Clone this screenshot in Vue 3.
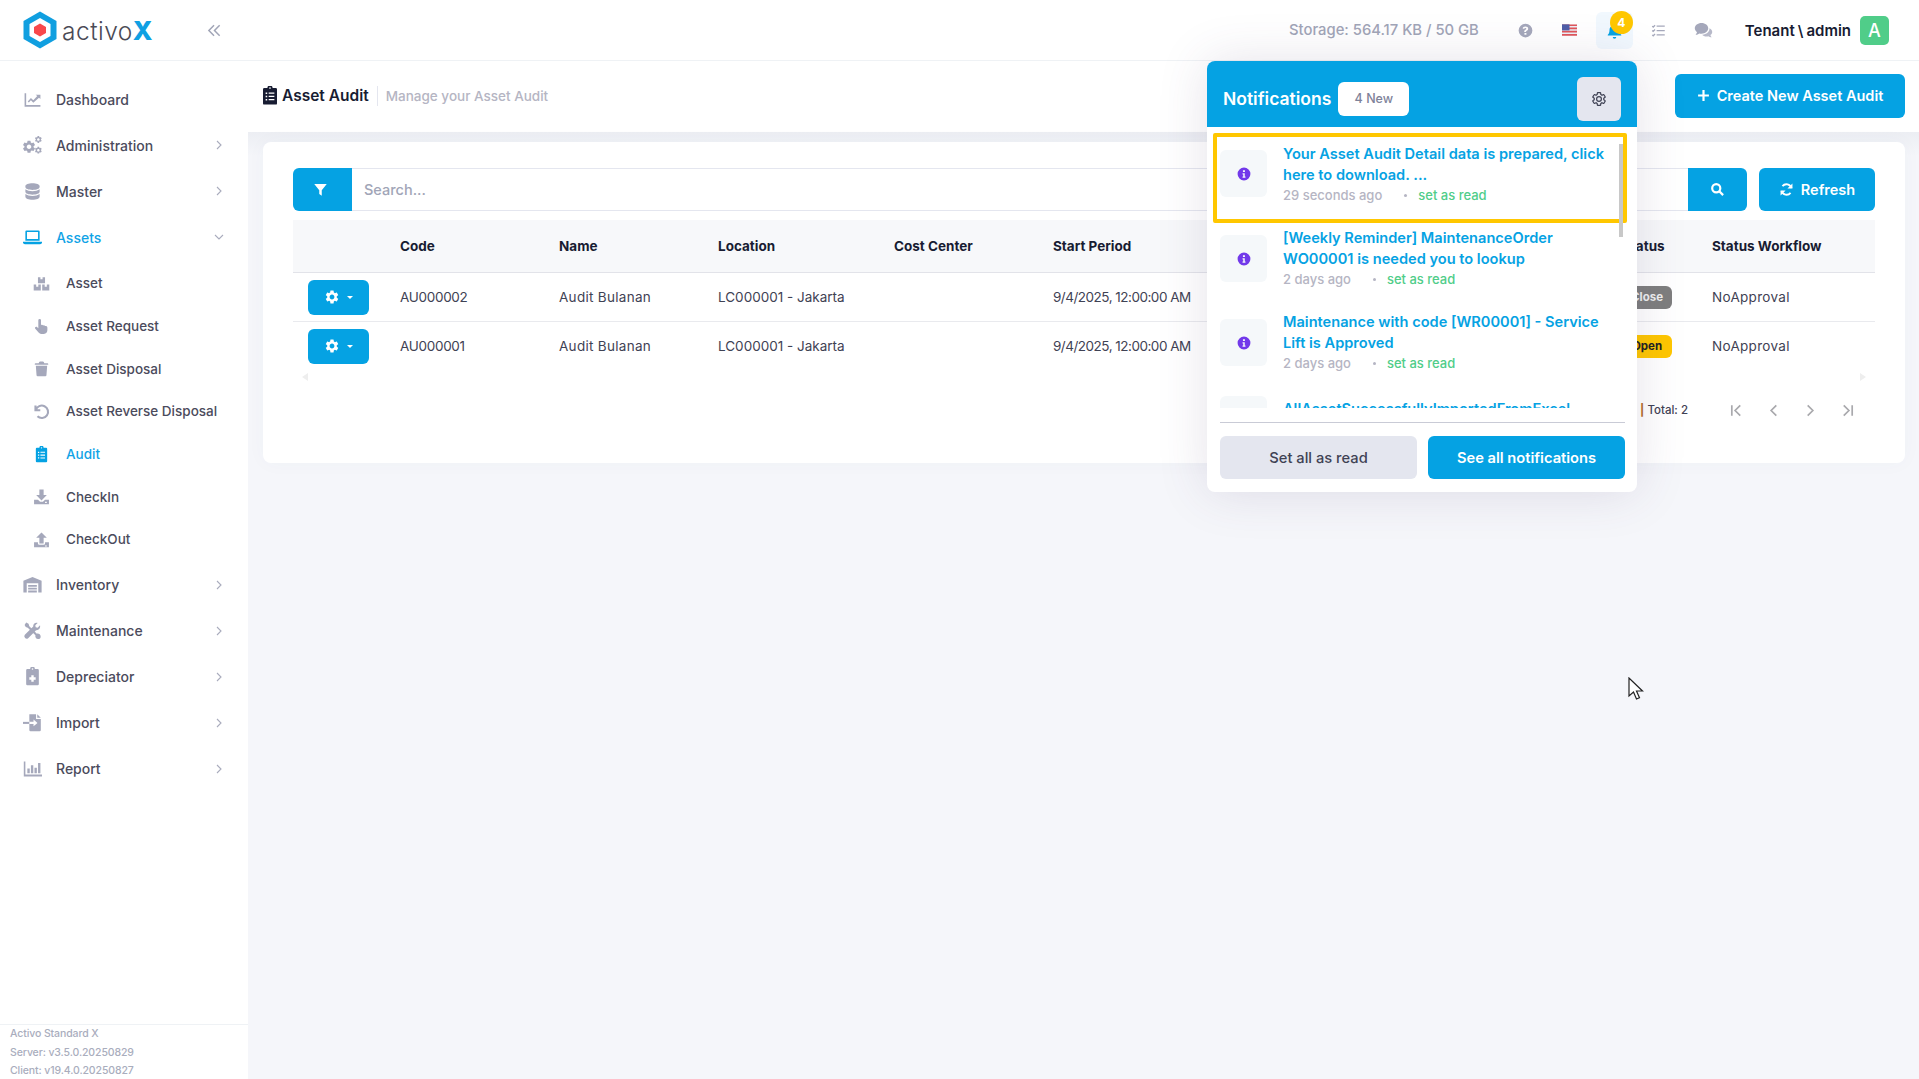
<script setup>
const gear =
  "M19.14 12.94c.04-.3.06-.61.06-.94 0-.32-.02-.64-.07-.94l2.03-1.58a.49.49 0 0 0 .12-.61l-1.92-3.32a.488.488 0 0 0-.59-.22l-2.39.96c-.5-.38-1.03-.7-1.62-.94l-.36-2.54a.484.484 0 0 0-.48-.41h-3.84c-.24 0-.43.17-.47.41l-.36 2.54c-.59.24-1.13.57-1.62.94l-2.39-.96c-.22-.08-.47 0-.59.22L2.74 8.87c-.12.21-.08.47.12.61l2.03 1.58c-.05.3-.09.63-.09.94s.02.64.07.94l-2.03 1.58a.49.49 0 0 0-.12.61l1.92 3.32c.12.22.37.29.59.22l2.39-.96c.5.38 1.03.7 1.62.94l.36 2.54c.05.24.24.41.48.41h3.84c.24 0 .44-.17.47-.41l.36-2.54c.59-.24 1.13-.56 1.62-.94l2.39.96c.22.08.47 0 .59-.22l1.92-3.32c.12-.22.07-.47-.12-.61l-2.01-1.58zM12 15.6c-1.98 0-3.6-1.62-3.6-3.6s1.62-3.6 3.6-3.6 3.6 1.62 3.6 3.6-1.62 3.6-3.6 3.6z";

const clipboard =
  "M9 2.5a3 3 0 0 1 6 0h3.5A1.5 1.5 0 0 1 20 4v17.5a1.5 1.5 0 0 1-1.5 1.5h-13A1.5 1.5 0 0 1 4 21.5V4a1.5 1.5 0 0 1 1.5-1.5zM12 1.6a1 1 0 1 0 0 2 1 1 0 0 0 0-2zM7 8v1.8h1.8V8zm3.5.1v1.6H17V8.100zM7 12v1.8h1.8V12zm3.500.1v1.6H17v-1.600zM7 16v1.8h1.8V16zm3.500.1v1.6H17v-1.600z";

const icons = {
  chart: ["M2 4h2v15h18v2H2z", "M6 14.500l4-4.500 3 3 5-5.500-2-1.500h6v5.500l-1.800-1.800L13 16l-3-3-2.600 2.800z"],
  cogs: [
    { d: gear, t: "translate(-2 4) scale(.8)" },
    { d: gear, t: "translate(14 -1) scale(.45)" },
    { d: gear, t: "translate(14 12.500) scale(.45)" },
  ],
  database: [
    "M12 1.500c-5 0-9 1.600-9 3.700v1.200C3 8.500 7 10 12 10s9-1.500 9-3.600V5.200c0-2.100-4-3.700-9-3.700z",
    "M3 9.300v3.100c0 2.100 4 3.600 9 3.600s9-1.500 9-3.600V9.300C19 10.900 15.500 11.700 12 11.700S5 10.900 3 9.300z",
    "M3 15.300v3.300c0 2.100 4 3.900 9 3.900s9-1.800 9-3.900v-3.300c-2 1.600-5.500 2.400-9 2.400s-7-.8-9-2.400z",
  ],
  laptop: [
    "M4.500 3h15A1.500 1.500 0 0 1 21 4.500V16H3V4.500A1.500 1.500 0 0 1 4.500 3zM5 5v9h14V5z",
    "M0 17.500h24v.5a2.500 2.500 0 0 1-2.500 2.500h-19A2.500 2.500 0 0 1 0 18z",
  ],
  boxes: [
    "M7 3h3.500v3h3V3H17v8.500H7z",
    "M1 13.500h3.500v3h3v-3H11V22H1z",
    "M13 13.500h3.500v3h3v-3H23V22H13z",
  ],
  hand: [
    "M7.500 3.200a1.900 1.900 0 0 1 3.800 0V10c1.300-.7 2.500-.4 3 .6 1-.5 2.300-.2 2.800.8 1.400-.5 3.200.3 3.200 2.200V17c0 3.200-1.700 5.500-5 5.500h-3.600c-2 0-3.200-.9-4.400-2.600L3.200 15c-1.300-1.900 1.200-3.800 2.800-2.100l1.500 1.500z",
  ],
  trash: [
    "M3.500 4.500H8l.8-1.700A1.300 1.300 0 0 1 10 2h4a1.300 1.300 0 0 1 1.200.8l.8 1.700h4.500a1 1 0 0 1 1 1v1.200h-19V5.500a1 1 0 0 1 1-1z",
    "M4 8h16l-1 13.500a1.600 1.600 0 0 1-1.600 1.500H6.600A1.600 1.600 0 0 1 5 21.500z",
  ],
  undo: [{ d: "M3.500 3.500v6.800h6.800M4 10a8.800 8.800 0 1 1 2.300 8.700", stroke: true }],
  clipboard: [clipboard],
  download: ["M9 2h6v8h4.500L12 17.500 4.500 10H9z", "M1.500 16.500H7l3 3h4l3-3h5.500V23h-21zM17 19.500V21h2.500v-1.500z"],
  upload: ["M12 2l7.500 7.500H15v8H9v-8H4.500z", "M1.500 16H7v1.500a2 2 0 0 0 2 2h6a2 2 0 0 0 2-2V16h5.500v7h-21zM17 20.500V22h2.500v-1.500z"],
  warehouse: ["M12 2.500L.5 7.300V22h4.200V10.500h14.600V22h4.200V7.300z", "M6.500 12.500h11v2.300h-11zM6.500 16h11v2.300h-11zM6.500 19.700h11V22h-11z"],
  tools: [
    "M2 5l2-3 3 1.500 1 3 9.500 9.500c2-.8 4.800 1 4.800 3.500a3.300 3.300 0 0 1-3.300 3.300c-2.500 0-4-2.500-3.300-4.800L6 8.500l-2.500-1z",
    "M21.500 5.500l-3 3-2.500-.5-.5-2.500 3-3c-2.700-1-6 1-5.600 4.400L2.300 17.500a3 3 0 0 0 4.200 4.200l10-10c3.300.5 5.900-2.800 5-6.200z",
  ],
  medical: [
    "M9 2.500a3 3 0 0 1 6 0h3.500A1.500 1.500 0 0 1 20 4v17.500a1.500 1.500 0 0 1-1.500 1.500h-13A1.500 1.500 0 0 1 4 21.500V4a1.500 1.500 0 0 1 1.500-1.500zM12 1.600a1 1 0 1 0 0 2 1 1 0 0 0 0-2zM10.500 10.500V13H8v3h2.500v2.500h3V16H16v-3h-2.500v-2.500z",
  ],
  file: [
    "M8 1.500h8.500V7.500h6v14a1.500 1.500 0 0 1-1.500 1.500H9.500A1.500 1.500 0 0 1 8 21.500V14h5.300v2.800l5-4.300-5-4.300V11H8z",
    "M18 1.500l4.500 4.500H18z",
    "M0 11.200h8v2.600H0z",
  ],
  bars: ["M1 3h2v16.500h21V22H1z", "M5.500 12h3v6h-3zM10 8h3v10h-3zM14.500 11h3v7h-3zM19 5h3v13h-3z"],
};

const shapes = (name) =>
  icons[name].map((s) => (typeof s === "string" ? { d: s } : s));

const menu = [
  { label: "Dashboard", icon: "chart" },
  { label: "Administration", icon: "cogs", more: true },
  { label: "Master", icon: "database", more: true },
  {
    label: "Assets",
    icon: "laptop",
    open: true,
    children: [
      { label: "Asset", icon: "boxes" },
      { label: "Asset Request", icon: "hand" },
      { label: "Asset Disposal", icon: "trash" },
      { label: "Asset Reverse Disposal", icon: "undo" },
      { label: "Audit", icon: "clipboard", active: true },
      { label: "CheckIn", icon: "download" },
      { label: "CheckOut", icon: "upload" },
    ],
  },
  { label: "Inventory", icon: "warehouse", more: true },
  { label: "Maintenance", icon: "tools", more: true },
  { label: "Depreciator", icon: "medical", more: true },
  { label: "Import", icon: "file", more: true },
  { label: "Report", icon: "bars", more: true },
];

const rows = [
  { code: "AU000002", status: "Close", cls: "close" },
  { code: "AU000001", status: "Open", cls: "open" },
];

const notifications = [
  { title: "Your Asset Audit Detail data is prepared, click here to download. ...", time: "29 seconds ago" },
  { title: "[Weekly Reminder] MaintenanceOrder WO00001 is needed you to lookup", time: "2 days ago" },
  { title: "Maintenance with code [WR00001] - Service Lift is Approved", time: "2 days ago" },
  { title: "AllAssetSuccessfullyImportedFromExcel" },
];
</script>

<template>
  <div class="app">
    <aside class="sidebar">
      <div class="brand">
        <svg class="logo" viewBox="0 0 34 38">
          <path d="M17 0.500L33.500 10v18L17 37.500.5 28V10z" fill="#109fe0" />
          <path d="M17 7l10.500 6v12L17 31 6.500 25V13z" fill="#fff" />
          <path d="M17 12.500l6 3.400v6.200l-6 3.400-6-3.400v-6.200z" fill="#f8484b" />
        </svg>
        <span class="brand-text">activo<b>X</b></span>
        <svg class="collapse" viewBox="0 0 16 16">
          <path d="M7.500 2.500L2 8l5.500 5.500M13.500 2.500L8 8l5.500 5.500" />
        </svg>
      </div>

      <nav class="nav">
        <template v-for="item in menu" :key="item.label">
          <div class="nav-row" :class="{ on: item.open }">
            <svg class="nav-icon" viewBox="0 0 24 24">
              <path
                v-for="(s, i) in shapes(item.icon)"
                :key="i"
                :d="s.d"
                :transform="s.t"
                fill-rule="evenodd"
              />
            </svg>
            <span class="nav-label">{{ item.label }}</span>
            <svg v-if="item.more" class="chev" viewBox="0 0 10 10"><path d="M3 1l4 4-4 4" /></svg>
            <svg v-if="item.open" class="chev down" viewBox="0 0 10 10"><path d="M1 3l4 4 4-4" /></svg>
          </div>
          <div v-if="item.children" class="sub">
            <div
              v-for="child in item.children"
              :key="child.label"
              class="sub-row"
              :class="{ on: child.active }"
            >
              <svg class="sub-icon" viewBox="0 0 24 24">
                <path
                  v-for="(s, i) in shapes(child.icon)"
                  :key="i"
                  :d="s.d"
                  :class="{ line: s.stroke }"
                  fill-rule="evenodd"
                />
              </svg>
              <span>{{ child.label }}</span>
            </div>
          </div>
        </template>
      </nav>

      <div class="version">
        <div>Activo Standard X</div>
        <div>Server: v3.5.0.20250829</div>
        <div>Client: v19.4.0.20250827</div>
      </div>
    </aside>

    <div class="main">
      <header class="topbar">
        <span class="storage">Storage: 564.17 KB / 50 GB</span>
        <svg class="help" viewBox="0 0 24 24">
          <path
            fill-rule="evenodd"
            d="M12 1a11 11 0 1 1 0 22 11 11 0 0 1 0-22zm-.2 4.500c-2.500 0-4 1.300-4.600 3l2.500 1c.4-1 1-1.500 2-1.500s1.600.5 1.600 1.200c0 .8-.7 1.200-1.500 1.700-1 .6-1.900 1.300-1.900 2.900v.7h2.900v-.5c0-.8.5-1.100 1.300-1.600 1-.6 2.200-1.500 2.200-3.300 0-2.200-1.900-3.600-4.500-3.600zM10.300 16v2.900h3.200V16z"
          />
        </svg>
        <svg class="flag" viewBox="0 0 16 12">
          <rect width="16" height="12" fill="#eceff5" />
          <path d="M0 0h16v1.700H0zM0 3.400h16v1.700H0zM0 6.900h16v1.700H0zM0 10.300h16V12H0z" fill="#e0565b" />
          <rect width="8" height="6.400" fill="#4f5fa8" />
        </svg>
        <div class="bell-wrap">
          <svg class="bell" viewBox="0 0 24 24">
            <path d="M12 2a2 2 0 0 1 2 2v.6c3 .8 5 3.400 5 6.400 0 4 1 5.500 2.500 7v1h-19v-1C4 16.500 5 15 5 11c0-3 2-5.600 5-6.400V4a2 2 0 0 1 2-2zM9.500 21h5a2.500 2.500 0 0 1-5 0z" />
          </svg>
          <span class="bell-count">4</span>
        </div>
        <svg class="tasks" viewBox="0 0 24 24">
          <path d="M9 5h13M9 12h13M9 19h13" />
          <path d="M2 5l1.500 1.500L6.500 3.500M2 12l1.500 1.500 3-3M2 19l1.500 1.500 3-3" />
        </svg>
        <svg class="chat" viewBox="0 0 24 24">
          <path d="M9.500 2.500c4.700 0 8.500 3 8.500 6.800s-3.800 6.800-8.500 6.800c-1 0-2-.1-2.900-.4C5.500 16.600 3.800 17.300 2 17.300c.8-.9 1.600-2 1.800-3.200C2 12.900 1 11.200 1 9.300c0-3.800 3.800-6.800 8.500-6.800z" />
          <path d="M19.500 9c2.100 1 3.500 2.700 3.500 4.800 0 1.600-.9 3-2.300 4 .2 1.100.8 2 1.600 2.800-1.600 0-3-.6-4-1.400-.8.200-1.700.3-2.500.3-2.300 0-4.300-.8-5.500-2.200 5 .2 9.700-3.300 9.200-8.300z" opacity=".8" />
        </svg>
        <span class="user">Tenant<span class="slash">\</span>admin</span>
        <span class="avatar">A</span>
      </header>

      <div class="subheader">
        <svg class="title-icon" viewBox="4 0 16 23.500" preserveAspectRatio="none">
          <path fill-rule="evenodd" :d="clipboard" />
        </svg>
        <h1>Asset Audit</h1>
        <span class="sep"></span>
        <span class="subtitle">Manage your Asset Audit</span>
        <button class="btn create">
          <svg viewBox="0 0 12 12"><path d="M6 1v10M1 6h10" /></svg>
          Create New Asset Audit
        </button>
      </div>

      <section class="content">
        <div class="card">
          <div class="search-row">
            <button class="filter">
              <svg viewBox="0 0 24 24"><path d="M2 3h20l-8 10v9l-4-3v-6z" /></svg>
            </button>
            <input class="search" placeholder="Search..." />
            <button class="search-btn">
              <svg viewBox="0 0 24 24"><circle cx="10" cy="10" r="6.500" /><path d="M15 15l6 6" /></svg>
            </button>
            <button class="btn refresh">
              <svg viewBox="0 0 24 24">
                <path d="M20 9.500A8.500 8.500 0 0 0 5.500 6.500M4 14.500a8.500 8.500 0 0 0 14.500 3" />
                <path class="solid" d="M21.500 2.500v8h-8zM2.500 21.500v-8h8z" />
              </svg>
              Refresh
            </button>
          </div>

          <table class="grid">
            <colgroup>
              <col style="width: 107px" />
              <col style="width: 159px" />
              <col style="width: 159px" />
              <col style="width: 176px" />
              <col style="width: 159px" />
              <col style="width: 569px" />
              <col style="width: 90px" />
              <col />
            </colgroup>
            <thead>
              <tr>
                <th></th>
                <th>Code</th>
                <th>Name</th>
                <th>Location</th>
                <th>Cost Center</th>
                <th>Start Period</th>
                <th>Status</th>
                <th>Status Workflow</th>
              </tr>
            </thead>
            <tbody>
              <tr v-for="row in rows" :key="row.code">
                <td class="action">
                  <button class="gear-btn">
                    <svg viewBox="0 0 24 24"><path fill-rule="evenodd" :d="gear" /></svg>
                    <i></i>
                  </button>
                </td>
                <td class="num">{{ row.code }}</td>
                <td class="wide">Audit Bulanan</td>
                <td>LC000001 - Jakarta</td>
                <td></td>
                <td class="date">9/4/2025, 12:00:00 AM</td>
                <td><span class="badge" :class="row.cls">{{ row.status }}</span></td>
                <td class="wide">NoApproval</td>
              </tr>
            </tbody>
          </table>

          <div class="scroll-hints"><i class="left"></i><i class="right"></i></div>

          <div class="pager">
            <span class="total"><em>|</em> Total: 2</span>
            <svg viewBox="0 0 16 16"><path d="M3 2.500v11M12 2.500L6.500 8l5.500 5.500" /></svg>
            <svg viewBox="0 0 16 16"><path d="M11 2.500L5.500 8l5.500 5.500" /></svg>
            <svg viewBox="0 0 16 16"><path d="M5 2.500L10.500 8 5 13.500" /></svg>
            <svg viewBox="0 0 16 16"><path d="M4 2.500L9.500 8 4 13.500M13 2.500v11" /></svg>
          </div>
        </div>
      </section>
    </div>

    <!-- notification dropdown -->
    <div class="notif">
      <div class="notif-head">
        <span class="notif-title">Notifications</span>
        <span class="notif-new">4 New</span>
        <button class="notif-gear">
          <svg viewBox="0 0 24 24"><path fill-rule="evenodd" :d="gear" /></svg>
        </button>
      </div>
      <div class="notif-list">
        <div v-for="(n, i) in notifications" :key="i" class="notif-item" :class="{ focus: i === 0 }">
          <span class="notif-icon">
            <svg viewBox="0 0 24 24">
              <path
                fill-rule="evenodd"
                d="M12 1a11 11 0 1 1 0 22 11 11 0 0 1 0-22zm-1.800 4.500v3.200h3.400V5.500zM9.500 10.500v2.300h1.200v3.400H9.500v2.300h5v-2.300h-1.200v-5.700z"
              />
            </svg>
          </span>
          <div class="notif-text">
            <div class="notif-msg">{{ n.title }}</div>
            <div v-if="n.time" class="notif-meta">
              <span>{{ n.time }}</span>
              <i></i>
              <span class="read">set as read</span>
            </div>
          </div>
        </div>
        <span class="notif-scroll"></span>
      </div>
      <div class="notif-foot">
        <button class="foot-btn light">Set all as read</button>
        <button class="foot-btn blue">See all notifications</button>
      </div>
    </div>

    <svg class="cursor" viewBox="0 0 16 24">
      <path d="M1 1v18l4.500-4 3 7 3-1.300-3-6.700H14.500z" fill="#fff" stroke="#222" stroke-width="1.200" />
    </svg>
  </div>
</template>

<style>
html,
body {
  margin: 0;
  background: #f5f6fa;
}
</style>

<style scoped>
.app {
  position: relative;
  display: flex;
  width: 1919px;
  height: 1079px;
  overflow: hidden;
  font-family: Inter, "Liberation Sans", sans-serif;
  font-size: 13px;
  color: #181c32;
  background: #f5f6fa;
}

button {
  font-family: inherit;
  border: 0;
  cursor: pointer;
}

/* sidebar */
.sidebar {
  width: 248px;
  flex: none;
  display: flex;
  flex-direction: column;
  background: #fff;
}
.brand {
  height: 60px;
  border-bottom: 1px solid #eff2f5;
  display: flex;
  align-items: center;
  padding-left: 23px;
}
.logo {
  width: 34px;
  height: 38px;
}
.brand-text {
  margin-left: 5px;
  font-size: 24.500px;
  font-weight: 300;
  color: #4a4a55;
  letter-spacing: 0.5px;
}
.brand-text b {
  color: #0fa0e3;
  font-weight: 800;
  font-size: 26px;
  letter-spacing: 0;
}
.collapse {
  width: 15px;
  height: 15px;
  margin-left: auto;
  margin-right: 26px;
  fill: none;
  stroke: #a1a5b7;
  stroke-width: 1.600;
}
.nav {
  flex: 1;
  padding-top: 15px;
}
.nav-row {
  height: 46px;
  display: flex;
  align-items: center;
  padding-left: 23px;
  font-weight: 500;
  font-size: 14px;
  color: #4b4b5c;
}
.nav-row.on {
  color: #10a3e6;
}
.nav-icon {
  width: 19px;
  height: 19px;
  flex: none;
  fill: #a5a8bb;
}
.nav-row.on .nav-icon {
  fill: #05a2e3;
}
.nav-label {
  margin-left: 14px;
}
.chev {
  width: 10px;
  height: 10px;
  margin-left: auto;
  margin-right: 24px;
  fill: none;
  stroke: #a9acbd;
  stroke-width: 1.100;
}
.sub {
  margin: 2px 0 1px;
}
.sub-row {
  height: 42.700px;
  display: flex;
  align-items: center;
  padding-left: 33px;
  font-weight: 500;
  font-size: 13.500px;
  color: #4b4b5c;
}
.sub-row.on {
  color: #10a3e6;
}
.sub-icon {
  width: 17px;
  height: 17px;
  flex: none;
  fill: #a5a8bb;
  margin-right: 16px;
}
.sub-row.on .sub-icon {
  fill: #05a2e3;
}
.sub-icon .line {
  fill: none;
  stroke: #a5a8bb;
  stroke-width: 3;
}
.version {
  border-top: 1px solid #eff2f5;
  padding: 0 0 0 10px;
  height: 54px;
  font-size: 10.500px;
  line-height: 18.500px;
  font-weight: 500;
  color: #a9adbd;
  letter-spacing: -0.1px;
}

/* top bar */
.main {
  flex: 1;
  min-width: 0;
  display: flex;
  flex-direction: column;
}
.topbar {
  height: 61px;
  box-sizing: border-box;
  background: #fff;
  border-bottom: 1px solid #eff2f5;
  display: flex;
  align-items: center;
  padding-right: 30px;
  justify-content: flex-end;
}
.storage {
  font-size: 14.800px;
  font-weight: 500;
  color: #a1a5b7;
  margin-right: 39px;
}
.help {
  width: 15px;
  height: 15px;
  fill: #a5a8bb;
  margin-right: 29px;
}
.flag {
  width: 15px;
  height: 12px;
  margin-right: 19px;
}
.bell-wrap {
  position: relative;
  width: 37px;
  height: 37px;
  border-radius: 6px;
  background: #f1f8fe;
  display: flex;
  align-items: center;
  justify-content: center;
  margin-right: 18px;
}
.bell {
  width: 17px;
  height: 17px;
  fill: #05a2e3;
}
.bell-count {
  position: absolute;
  top: -1px;
  left: 14px;
  width: 23px;
  height: 23px;
  border-radius: 50%;
  background: #ffc700;
  color: #fff;
  font-size: 12px;
  font-weight: 700;
  display: flex;
  align-items: center;
  justify-content: center;
}
.tasks {
  width: 15px;
  height: 15px;
  fill: none;
  stroke: #a5a8bb;
  stroke-width: 2;
  margin-right: 28px;
}
.chat {
  width: 19px;
  height: 19px;
  fill: #a5a8bb;
  margin-right: 32px;
}
.user {
  font-size: 15px;
  font-weight: 600;
  color: #181c32;
  margin-right: 9px;
}
.slash {
  margin: 0 3px;
}
.avatar {
  width: 29px;
  height: 29px;
  border-radius: 5px;
  background: #50cd89;
  color: #fff;
  font-size: 18px;
  font-weight: 500;
  display: flex;
  align-items: center;
  justify-content: center;
}

/* page title */
.subheader {
  height: 71px;
  box-sizing: border-box;
  background: #fff;
  display: flex;
  align-items: center;
  padding: 0 14px 2px 15px;
}
.title-icon {
  width: 14px;
  height: 19px;
  flex: none;
  fill: #181c32;
}
h1 {
  margin: 0 0 0 5px;
  font-size: 15.500px;
  font-weight: 600;
  color: #181c32;
}
.sep {
  width: 1px;
  height: 20px;
  background: #e4e6ef;
  margin: 0 8px;
}
.subtitle {
  font-size: 13.500px;
  font-weight: 500;
  color: #b5b5c3;
}
.btn {
  display: inline-flex;
  align-items: center;
  justify-content: center;
  background: #05a2e3;
  color: #fff;
  font-size: 14.500px;
  font-weight: 600;
  border-radius: 6px;
}
.create {
  margin-left: auto;
  width: 230px;
  height: 44px;
  gap: 7px;
}
.create svg {
  width: 13px;
  height: 13px;
  fill: none;
  stroke: #fff;
  stroke-width: 2;
}

/* card */
.content {
  flex: 1;
  padding: 10px 14px 0 15px;
  background: linear-gradient(#eceef3, #f5f6fa 24px);
}
.card {
  position: relative;
  height: 321px;
  box-sizing: border-box;
  background: #fff;
  border-radius: 8px;
  padding: 26px 30px 0;
  box-shadow: 0 0 20px rgba(76, 87, 125, 0.03);
}
.search-row {
  display: flex;
  height: 43px;
}
.filter {
  width: 59px;
  background: #05a2e3;
  border-radius: 6px 0 0 6px;
  padding: 0 5px 0 0;
}
.filter svg {
  width: 15px;
  height: 15px;
  fill: #fff;
  display: block;
  margin: auto;
}
.search {
  flex: 1;
  min-width: 0;
  box-sizing: border-box;
  border: 1px solid #e4e6ef;
  border-left: 0;
  border-right: 0;
  padding: 0 12px;
  outline: 0;
  font-family: inherit;
  font-size: 14.500px;
  font-weight: 500;
}
.search::placeholder {
  color: #a1a5b7;
}
.search-btn {
  width: 59px;
  background: #05a2e3;
  border-radius: 0 6px 6px 0;
  padding: 0;
}
.search-btn svg {
  width: 15px;
  height: 15px;
  display: block;
  margin: auto;
  fill: none;
  stroke: #fff;
  stroke-width: 3.500;
}
.refresh {
  width: 116px;
  margin-left: 12px;
  gap: 7px;
}
.refresh svg {
  width: 15px;
  height: 15px;
  fill: none;
  stroke: #fff;
  stroke-width: 3;
}
.refresh .solid {
  fill: #fff;
  stroke: none;
}

.grid {
  width: 100%;
  margin-top: 9px;
  border-collapse: collapse;
  table-layout: fixed;
  font-size: 13.500px;
  color: #3f4254;
}
.grid th {
  height: 52px;
  padding: 0;
  text-align: left;
  font-size: 13.500px;
  font-weight: 700;
  color: #181c32;
  background: #f7f8fa;
  border-bottom: 1px solid #e2e3e9;
}
.grid td {
  height: 48px;
  padding: 0;
  border-bottom: 1px solid #e9eaee;
}
.grid tbody tr:last-child td {
  border-bottom: 0;
}
.grid .num {
  letter-spacing: -0.3px;
}
.grid .date {
  letter-spacing: -0.5px;
}
.grid .wide {
  letter-spacing: 0.3px;
}
.action {
  padding-left: 15px !important;
}
.gear-btn {
  width: 61px;
  height: 35px;
  background: #05a2e3;
  border-radius: 6px;
  display: flex;
  align-items: center;
  justify-content: center;
  gap: 7px;
  padding: 0;
}
.gear-btn svg {
  width: 16px;
  height: 16px;
  fill: #fff;
}
.gear-btn i {
  width: 0;
  height: 0;
  border-left: 3px solid transparent;
  border-right: 3px solid transparent;
  border-top: 3px solid #fff;
}
.badge {
  display: inline-block;
  width: 50px;
  height: 23px;
  line-height: 23px;
  text-align: center;
  border-radius: 6px;
  font-size: 11.500px;
  font-weight: 700;
}
.badge.close {
  background: #7e7e7e;
  color: #eee;
}
.badge.open {
  background: #ffc700;
  color: #222;
}
.scroll-hints {
  display: flex;
  justify-content: space-between;
  padding: 0 9px;
  height: 10px;
  margin-top: 3px;
}
.scroll-hints i {
  width: 0;
  height: 0;
  border-top: 4px solid transparent;
  border-bottom: 4px solid transparent;
}
.scroll-hints .left {
  border-right: 6px solid #eee;
}
.scroll-hints .right {
  border-left: 6px solid #eee;
}
.pager {
  display: flex;
  align-items: center;
  justify-content: flex-end;
  height: 22px;
  margin-top: 16px;
  padding-right: 20px;
  gap: 22px;
}
.pager .total {
  font-size: 11.500px;
  font-weight: 500;
  color: #3f4254;
  margin-right: 19px;
}
.pager em {
  font-style: normal;
  color: #b36a1e;
  font-weight: 700;
}
.pager svg {
  width: 15px;
  height: 15px;
  fill: none;
  stroke: #a9a9ad;
  stroke-width: 1.800;
}

/* notifications dropdown */
.notif {
  position: absolute;
  left: 1207px;
  top: 61px;
  width: 430px;
  height: 431px;
  background: #fff;
  border-radius: 8px;
  box-shadow: 0 0 50px rgba(82, 63, 105, 0.15);
  display: flex;
  flex-direction: column;
  overflow: hidden;
}
.notif-head {
  height: 66px;
  flex: none;
  box-sizing: border-box;
  background: #05a2e3;
  display: flex;
  align-items: center;
  padding: 9px 16px 0;
}
.notif-title {
  color: #fff;
  font-size: 17.500px;
  font-weight: 600;
}
.notif-new {
  margin-left: 7px;
  width: 71px;
  height: 34px;
  border-radius: 6px;
  background: #fff;
  color: #7e8299;
  font-size: 12.500px;
  font-weight: 500;
  display: flex;
  align-items: center;
  justify-content: center;
}
.notif-gear {
  margin-left: auto;
  width: 44px;
  height: 44px;
  border-radius: 6px;
  background: #e4e6ef;
  padding: 0;
}
.notif-gear svg {
  display: block;
  margin: auto;
  width: 16px;
  height: 16px;
  fill: none;
  stroke: #3f4254;
  stroke-width: 1.800;
}
.notif-list {
  position: relative;
  height: 281px;
  flex: none;
  overflow: hidden;
}
.notif-item {
  display: flex;
  height: 84px;
  padding: 4px 12px 0 13px;
  box-sizing: border-box;
}
.notif-item:nth-child(3) {
  height: 77px;
}
.notif-item:nth-child(4) .notif-text {
  padding-top: 10px;
}
.notif-item.focus {
  margin: 6px 10px 0 6px;
  height: 90px;
  padding: 13px 6px 0 3px;
  border: 4px solid #ffc700;
  border-radius: 2px;
}
.notif-icon {
  width: 47px;
  height: 47px;
  flex: none;
  border-radius: 6px;
  background: #f5f8fa;
  display: flex;
  align-items: center;
  justify-content: center;
}
.notif-item:not(.focus) .notif-icon {
  margin-top: 8px;
}
.notif-icon svg {
  width: 14px;
  height: 14px;
  fill: #7239ea;
}
.notif-text {
  margin-left: 16px;
  min-width: 0;
  flex: 1;
}
.notif-item.focus .notif-text {
  margin-top: -7px;
}
.notif-msg {
  max-width: 328px;
  padding-top: 1px;
  font-size: 14.600px;
  line-height: 21px;
  font-weight: 600;
  color: #05a2e3;
}
.notif-meta {
  display: flex;
  align-items: center;
  font-size: 13px;
  line-height: 19px;
  font-weight: 500;
  color: #b5b5c3;
}
.notif-meta i {
  width: 3px;
  height: 3px;
  border-radius: 50%;
  background: #b5b5c3;
  margin: 0 11px 0 22px;
}
.read {
  color: #50cd89;
}
.notif-scroll {
  position: absolute;
  right: 14px;
  top: 17px;
  width: 4px;
  height: 93px;
  background: #c8c8c8;
}
.notif-foot {
  margin: 14px 12px 0 13px;
  padding-top: 13px;
  border-top: 1px solid #c9cbd6;
  display: flex;
  gap: 11px;
}
.foot-btn {
  height: 43px;
  flex: 1;
  border-radius: 6px;
  font-size: 14.700px;
  font-weight: 500;
}
.foot-btn.light {
  background: #e4e6ef;
  color: #3f4254;
}
.foot-btn.blue {
  background: #05a2e3;
  color: #fff;
  font-weight: 600;
}
.cursor {
  position: absolute;
  left: 1628px;
  top: 677px;
  width: 16px;
  height: 24px;
}
</style>
